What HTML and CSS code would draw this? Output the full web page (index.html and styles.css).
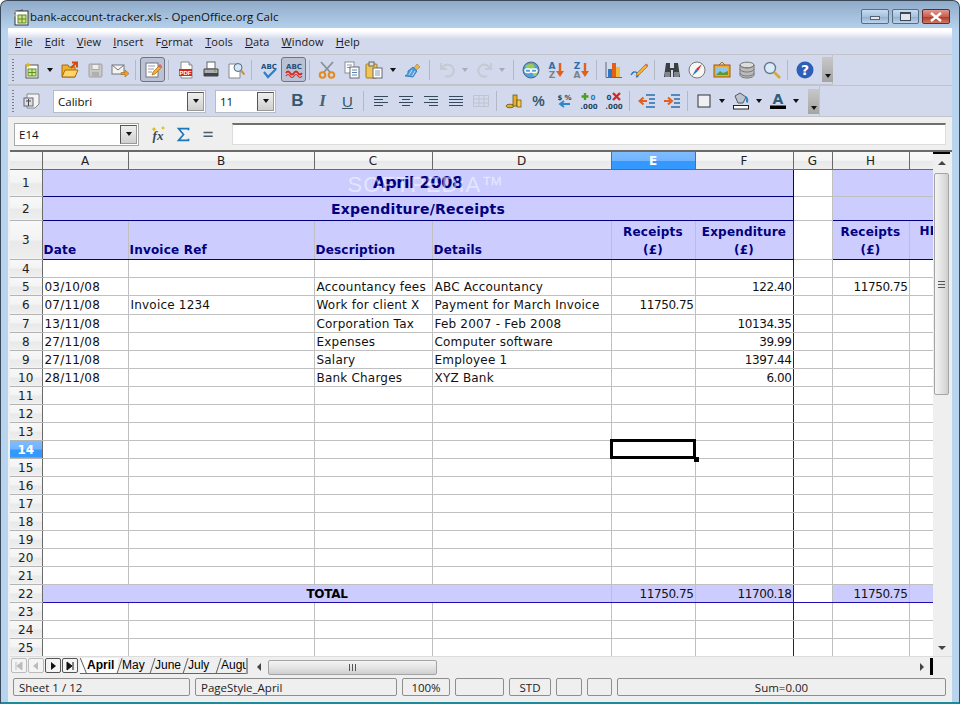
FILE: index.html
```html
<!DOCTYPE html>
<html lang="en">
<head>
    <meta charset="UTF-8">
    <title>bank-account-tracker.xls - OpenOffice.org Calc</title>
    <link rel="stylesheet" href="styles.css">
</head>
<body>
<div class="window">

    <div class="titlebar">
        <svg class="app-icon" viewBox="0 0 18 18"><path d="M2 4l9-3v3z" fill="#777"/><rect x="3" y="3" width="13" height="14" fill="#fff" stroke="#333"/><rect x="6" y="7" width="8" height="8" fill="#cfe08a" stroke="#5a8a20"/><path d="M10 7v8M6 11h8" stroke="#5a8a20"/><path d="M2 2l3 1-3 2zM2 6l3 1-3 2z" fill="#aaa"/></svg>
        <span class="title">bank-account-tracker.xls - OpenOffice.org Calc</span>
        <div class="caption-btns">
            <span class="cap"><i class="cap-min"></i></span>
            <span class="cap"><i class="cap-max"></i></span>
            <span class="cap cap-close">
                <svg viewBox="0 0 14 10" width="14" height="10"><path d="M2 1l10 8M12 1L2 9" stroke="#fff" stroke-width="2.4"/></svg>
            </span>
        </div>
    </div>

    <div class="content">
        <div class="menubar">
            <span><u>F</u>ile</span>
            <span><u>E</u>dit</span>
            <span><u>V</u>iew</span>
            <span><u>I</u>nsert</span>
            <span>F<u>o</u>rmat</span>
            <span><u>T</u>ools</span>
            <span><u>D</u>ata</span>
            <span><u>W</u>indow</span>
            <span><u>H</u>elp</span>
        </div>

        <div class="toolrow">
            <div class="toolbar tb-standard">
                <i class="handle"></i>
                <span class="btn"><svg viewBox="0 0 18 18"><rect x="3" y="4" width="12" height="13" fill="#fff" stroke="#555"/><rect x="5" y="8" width="8" height="7" fill="#d4e48e" stroke="#5d8f22"/><path d="M9 8v7M5 11.500h8" stroke="#5d8f22"/><path d="M5 1l1 2 2 1-2 1-1 2-1-2-2-1 2-1z" fill="#e8b800"/></svg></span>
                <span class="arrow"><b></b></span>
                <span class="btn btn-after-arrow"><svg viewBox="0 0 18 18"><path d="M1 4h6l1 2h6v10H1z" fill="#f0b429" stroke="#a86a10"/><path d="M1 16l3-7h13l-3 7z" fill="#fcd668" stroke="#a86a10"/><path d="M10 7l5-5M11 1.500h5v5" stroke="#d9480f" stroke-width="2" fill="none"/></svg></span>
                <span class="btn"><svg viewBox="0 0 18 18"><rect x="3" y="3" width="13" height="13" rx="1" fill="#c8c8c8" stroke="#a0a0a0"/><rect x="6" y="3.500" width="7" height="5" fill="#eee" stroke="#aaa"/><rect x="6" y="11" width="7" height="5" fill="#b0b0b0"/></svg></span>
                <span class="btn"><svg viewBox="0 0 18 18"><rect x="1" y="4" width="12" height="9" fill="#f4f4f4" stroke="#777"/><path d="M1 4l6 5 6-5" fill="none" stroke="#777"/><path d="M10 11.500h4V9l4 3.500-4 3.500v-2.500h-4z" fill="#f0a020" stroke="#a86a10" stroke-width=".6"/></svg></span>
                <i class="sep"></i>
                <span class="btn btn-on"><svg viewBox="0 0 18 18"><rect x="2" y="2" width="12" height="14" fill="#fff" stroke="#777"/><path d="M4 5h7M4 8h6M4 11h4" stroke="#99a"/><path d="M8 14l1-3 7-7 2 2-7 7z" fill="#f2b134" stroke="#a86a10" stroke-width=".7"/><path d="M14 5l2-2 2 2-2 2z" fill="#e06666"/></svg></span>
                <i class="sep"></i>
                <span class="btn"><svg viewBox="0 0 18 18"><path d="M4 1h8l3 3v13H4z" fill="#fff" stroke="#888"/><path d="M12 1v3h3" fill="#ddd" stroke="#888"/><rect x="2" y="8" width="13" height="7" fill="#d8281c"/><text x="8.500" y="13.800" class="svg-pdf">PDF</text></svg></span>
                <span class="btn"><svg viewBox="0 0 18 18"><rect x="5" y="1" width="8" height="7" fill="#fff" stroke="#666"/><path d="M2 8h14v7H2z" fill="#a9afb5" stroke="#444"/><rect x="2" y="12" width="14" height="3" fill="#444"/><rect x="12" y="9.500" width="2" height="1.300" fill="#5ac020"/></svg></span>
                <span class="btn"><svg viewBox="0 0 18 18"><path d="M2 3h8l3 3v11H2z" fill="#fff" stroke="#888"/><circle cx="11" cy="6.500" r="4" fill="#cfe6fb" stroke="#567"/><path d="M14 9.500l3.500 4" stroke="#c89a2a" stroke-width="2.200"/></svg></span>
                <i class="sep"></i>
                <span class="btn"><svg viewBox="0 0 18 18"><text x="9" y="8" class="svg-abc">ABC</text><path d="M4 11l4 5 8-8" fill="none" stroke="#2a7fd0" stroke-width="2.200"/></svg></span>
                <span class="btn btn-on"><svg viewBox="0 0 18 18"><text x="9" y="8" class="svg-abc">ABC</text><path d="M1 12q2-3 4 0t4 0 4 0 4 0" fill="none" stroke="#d8281c" stroke-width="1.800"/><path d="M1 15q2-3 4 0t4 0 4 0 4 0" fill="none" stroke="#d8281c" stroke-width="1.200"/></svg></span>
                <i class="sep"></i>
                <span class="btn"><svg viewBox="0 0 18 18"><path d="M3 1l9 10M15 1L6 11" stroke="#8a8f95" stroke-width="1.800"/><circle cx="4.500" cy="14" r="2.800" fill="none" stroke="#e58a1f" stroke-width="2"/><circle cx="13.500" cy="14" r="2.800" fill="none" stroke="#e58a1f" stroke-width="2"/></svg></span>
                <span class="btn"><svg viewBox="0 0 18 18"><rect x="2" y="1" width="9" height="11" fill="#fff" stroke="#8a8f95"/><path d="M4 4h5M4 6.500h5" stroke="#89a"/><rect x="7" y="6" width="9" height="11" fill="#fff" stroke="#667"/><path d="M9 9h5M9 11.500h5M9 14h5" stroke="#5a82b0"/></svg></span>
                <span class="btn btn-paste"><svg viewBox="0 0 18 18"><rect x="1" y="3" width="11" height="14" rx="1" fill="#f2c655" stroke="#a07a20"/><rect x="4" y="1" width="5" height="4" fill="#ddd" stroke="#666"/><rect x="8" y="7" width="9" height="10" fill="#fff" stroke="#667"/><path d="M10 10h5M10 12h5M10 14h5" stroke="#89a"/></svg></span>
                <span class="arrow arrow-paste"><b></b></span>
                <span class="btn btn-brush"><svg viewBox="0 0 18 18"><path d="M10 7l3-4 3 3-4 3z" fill="#e9b84a" stroke="#a07a20" stroke-width=".6"/><path d="M9 6l4 4-4 6-8-1q4-2 3-5z" fill="#4e9de0" stroke="#2367a8" stroke-width=".7"/><path d="M5 14l3-5M8 15l3-5" stroke="#bfe0fa"/></svg></span>
                <i class="sep sep-wide"></i>
                <span class="btn"><svg viewBox="0 0 18 18"><path d="M3 2v6h6M4 8a6 6 0 1 1 3 7" fill="none" stroke="#c6cad2" stroke-width="2.200"/></svg></span>
                <span class="arrow arrow-off"><b></b></span>
                <span class="btn btn-redo"><svg viewBox="0 0 18 18"><path d="M15 2v6H9M14 8a6 6 0 1 0-3 7" fill="none" stroke="#c6cad2" stroke-width="2.200"/></svg></span>
                <span class="arrow arrow-off arrow-redo"><b></b></span>
                <i class="sep sep-redo"></i>
                <span class="btn"><svg viewBox="0 0 18 18"><circle cx="9" cy="9" r="8" fill="#4f9fd8" stroke="#567"/><path d="M3 5q4-3 8-2l2 3-3 2-5 0zM11 11l5-1-2 5-3 0z" fill="#9cc95a"/><rect x="3" y="8" width="6" height="3.500" rx="1.700" fill="none" stroke="#fff" stroke-width="1.500"/><rect x="9" y="8" width="6" height="3.500" rx="1.700" fill="none" stroke="#fff" stroke-width="1.500"/></svg></span>
                <span class="btn"><svg viewBox="0 0 18 18"><text x="5" y="7.500" class="svg-sort svg-blue">A</text><text x="5" y="16.500" class="svg-sort svg-gray">Z</text><path d="M13 2v10" stroke="#e2601a" stroke-width="2.400"/><path d="M9 10h8l-4 6z" fill="#e2601a"/></svg></span>
                <span class="btn"><svg viewBox="0 0 18 18"><text x="5" y="7.500" class="svg-sort svg-blue">Z</text><text x="5" y="16.500" class="svg-sort svg-gray">A</text><path d="M13 2v10" stroke="#e2601a" stroke-width="2.400"/><path d="M9 10h8l-4 6z" fill="#e2601a"/></svg></span>
                <i class="sep"></i>
                <span class="btn"><svg viewBox="0 0 18 18"><path d="M1 1v15.500h16" fill="none" stroke="#667"/><rect x="3" y="8" width="4" height="8" fill="#2d76c0"/><rect x="7" y="2" width="4" height="14" fill="#e2601a"/><rect x="11" y="6" width="4" height="10" fill="#f1bd38"/></svg></span>
                <span class="btn"><svg viewBox="0 0 18 18"><path d="M1 14q3-5 6-2t-1 4" fill="none" stroke="#2d76c0" stroke-width="1.400"/><path d="M7 12l9-9 2 2-9 9-3 1z" fill="#f2b134" stroke="#a86a10" stroke-width=".7"/><path d="M15 4l1.500-1.500 1.500 1.500-1.500 1.500z" fill="#e06666"/></svg></span>
                <i class="sep"></i>
                <span class="btn"><svg viewBox="0 0 18 18"><path d="M3 2h4v5h4V2h4l2 14h-7V9H8v7H1z" fill="#3b3f44"/><rect x="2" y="11" width="5" height="5" fill="#80858b"/><rect x="11" y="11" width="5" height="5" fill="#80858b"/></svg></span>
                <span class="btn"><svg viewBox="0 0 18 18"><circle cx="9" cy="9" r="8" fill="#f6f6f6" stroke="#777"/><path d="M14 3l-4 7-2-2z" fill="#d8281c"/><path d="M4 15l4-7 2 2z" fill="#2d76c0"/></svg></span>
                <span class="btn"><svg viewBox="0 0 18 18"><path d="M6 4l3-3 3 3" fill="none" stroke="#b06a10"/><rect x="1" y="4" width="16" height="12" fill="#f0a830" stroke="#9c5c10"/><rect x="3" y="6" width="12" height="8" fill="#8cc8ee"/><path d="M3 14l4-4 3 2 5-2v4z" fill="#5a9a30"/></svg></span>
                <span class="btn"><svg viewBox="0 0 18 18"><ellipse cx="9" cy="4" rx="7" ry="2.800" fill="#ddd" stroke="#777"/><path d="M2 4v10c0 1.500 3 3 7 3s7-1.500 7-3V4c0 1.500-3 3-7 3S2 5.500 2 4z" fill="#bbb" stroke="#777"/><path d="M2 8c0 1.500 3 3 7 3s7-1.500 7-3M2 12c0 1.500 3 3 7 3s7-1.500 7-3" fill="none" stroke="#777"/></svg></span>
                <span class="btn"><svg viewBox="0 0 18 18"><circle cx="7" cy="7" r="5.500" fill="#d8ecfb" stroke="#6a7a8a" stroke-width="1.400"/><path d="M11 11l6 6" stroke="#d8a830" stroke-width="2.600"/></svg></span>
                <i class="sep"></i>
                <span class="btn"><svg viewBox="0 0 18 18"><circle cx="9" cy="9" r="8.500" fill="#2e5fb8"/><text x="9" y="14" class="svg-help">?</text></svg></span>
                <span class="more more-standard"><b></b></span>
            </div>
        </div>

        <div class="toolrow toolrow-last">
            <div class="toolbar tb-format">
                <i class="handle"></i>
                <span class="btn"><svg viewBox="0 0 18 18"><path d="M4 2h12v10l-4 4H4z" fill="#f4f4f4" stroke="#888"/><rect x="1" y="6" width="9" height="8" fill="#ddd" stroke="#667"/><path d="M5.500 7v7M3 9h5" stroke="#445"/></svg></span>
                <div class="combo combo-font">Calibri<span class="combo-btn"><b></b></span></div>
                <div class="combo combo-size">11<span class="combo-btn"><b></b></span></div>
                <span class="btn btn-b"><em class="fmt fmt-b">B</em></span>
                <span class="btn"><em class="fmt fmt-i">I</em></span>
                <span class="btn"><em class="fmt fmt-u">U</em></span>
                <i class="sep"></i>
                <span class="btn"><svg viewBox="0 0 18 18"><path d="M2 4.500h14M2 7.500h9M2 10.500h14M2 13.500h9" stroke="#34495e"/></svg></span>
                <span class="btn"><svg viewBox="0 0 18 18"><path d="M2 4.500h14M5 7.500h8M2 10.500h14M5 13.500h8" stroke="#34495e"/></svg></span>
                <span class="btn"><svg viewBox="0 0 18 18"><path d="M2 4.500h14M7 7.500h9M2 10.500h14M7 13.500h9" stroke="#34495e"/></svg></span>
                <span class="btn"><svg viewBox="0 0 18 18"><path d="M2 4.500h14M2 7.500h14M2 10.500h14M2 13.500h14" stroke="#34495e"/></svg></span>
                <span class="btn"><svg viewBox="0 0 18 18"><path d="M1.500 3.500h15v11h-15zM1.500 7h15M1.500 11h15M7 3.500v11M12 3.500v11" fill="none" stroke="#c0c4ce"/></svg></span>
                <i class="sep"></i>
                <span class="btn"><svg viewBox="0 0 18 18"><ellipse cx="5" cy="14" rx="4" ry="1.800" fill="#e8b020" stroke="#5c4a10" stroke-width=".7"/><rect x="8" y="3" width="4" height="11" fill="#e8b020" stroke="#5c4a10" stroke-width=".7"/><rect x="12" y="8" width="4" height="7" fill="#f4cd50" stroke="#5c4a10" stroke-width=".7"/></svg></span>
                <span class="btn"><em class="fmt fmt-pct">%</em></span>
                <span class="btn"><svg viewBox="0 0 18 18"><text x="5" y="8" class="svg-small">$</text><text x="13" y="8" class="svg-small">%</text><path d="M15 12H6M9 9l-4 3 4 3" fill="none" stroke="#2d86c8" stroke-width="1.800"/></svg></span>
                <span class="btn"><svg viewBox="0 0 18 18"><path d="M5 1v7M1.500 4.500h7" stroke="#4aa020" stroke-width="2.400"/><text x="13" y="8" class="svg-small svg-num">0</text><text x="9" y="16.500" class="svg-small">.000</text></svg></span>
                <span class="btn"><svg viewBox="0 0 18 18"><text x="4" y="8" class="svg-small">0</text><path d="M8 1l7 7M15 1l-7 7" stroke="#d8281c" stroke-width="2.400"/><text x="9" y="16.500" class="svg-small">.000</text></svg></span>
                <i class="sep"></i>
                <span class="btn"><svg viewBox="0 0 18 18"><path d="M9 9H3M5.500 5.500L1.500 9l4 3.500" fill="none" stroke="#e2601a" stroke-width="2"/><path d="M8 3h9M11 7h6M11 11h6M8 15h9" stroke="#2d6ea8" stroke-width="1.300"/></svg></span>
                <span class="btn"><svg viewBox="0 0 18 18"><path d="M1 9h6M5 5.500L9 9l-4 3.500" fill="none" stroke="#e2601a" stroke-width="2"/><path d="M8 3h9M11 7h6M11 11h6M8 15h9" stroke="#2d6ea8" stroke-width="1.300"/></svg></span>
                <i class="sep"></i>
                <span class="btn btn-border"><svg viewBox="0 0 18 18"><rect x="3" y="3" width="12" height="12" fill="#eef0f6" stroke="#333"/></svg></span>
                <span class="arrow"><b></b></span>
                <span class="btn btn-fill"><svg viewBox="0 0 18 18"><path d="M3 4l5-3 6 4-3 6H6z" fill="#bcc4cc" stroke="#556"/><path d="M14 4q3 2 2 7l-2-1z" fill="#2d86c8"/><rect x="1.500" y="13.500" width="15" height="3.500" fill="#fff" stroke="#222"/></svg></span>
                <span class="arrow"><b></b></span>
                <span class="btn btn-fill"><svg viewBox="0 0 18 18"><text x="9" y="12" class="svg-color">A</text><rect x="1" y="13.500" width="16" height="3.500" fill="#000"/></svg></span>
                <span class="arrow"><b></b></span>
                <span class="more more-format"><b></b></span>
            </div>
        </div>

        <div class="formulabar">
            <div class="combo combo-name">E14<span class="combo-btn"><b></b></span></div>
            <span class="fbtn fbtn-first"><svg viewBox="0 0 18 18"><text x="8" y="15" class="svg-fx">fx</text><path d="M4 2l1 1.500L6.500 4 5 5 4 6.500 3 5 1.500 4 3 3.500zM13 1l.7 1.300 1.300.7-1.300.7-.7 1.300-.7-1.300L11 3l1.300-.7z" fill="#e8b800"/></svg></span>
            <span class="fbtn"><svg class="fbtn-small" viewBox="0 0 18 18"><path d="M15 4V2H3l6 7-6 7h12v-2" fill="none" stroke="#1978bc" stroke-width="2"/></svg></span>
            <span class="fbtn"><svg class="fbtn-small" viewBox="0 0 18 18"><path d="M3 6.500h11M3 11h11" stroke="#4a5a68" stroke-width="1.800"/></svg></span>
            <div class="formula-input"></div>
        </div>

        <div class="sheet">
            <div class="grid-wrap">
                <table class="grid">
                    <colgroup>
                        <col class="c-head"><col class="c-a"><col class="c-b"><col class="c-c"><col class="c-d"><col class="c-e"><col class="c-f"><col class="c-g"><col class="c-h"><col class="c-i">
                    </colgroup>
                    <thead>
                        <tr class="r-head"><th></th><th>A</th><th>B</th><th>C</th><th>D</th><th class="selected">E</th><th>F</th><th>G</th><th>H</th><th></th></tr>
                    </thead>
                    <tbody>
                        <tr class="r-1"><th>1</th><td colspan="6" class="title1">April 2008<span class="watermark">SOFTPEDIA™</span></td><td class="gap gap-top"></td><td colspan="2" class="band band-top"></td></tr>
                        <tr class="r-2"><th>2</th><td colspan="6" class="title2">Expenditure/Receipts</td><td class="gap"></td><td colspan="2" class="band band-low"></td></tr>
                        <tr class="r-3"><th>3</th><td class="hd">Date</td><td class="hd">Invoice Ref</td><td class="hd">Description</td><td class="hd">Details</td><td class="hd hd-c">Receipts<br>(£)</td><td class="hd hd-c line-r">Expenditure<br>(£)</td><td></td><td class="hd hd-c line-l">Receipts<br>(£)</td><td class="hd hd-clip">HI</td></tr>
                        <tr><th>4</th><td></td><td></td><td></td><td></td><td></td><td class="line-r"></td><td></td><td></td><td></td></tr>
                        <tr><th>5</th><td>03/10/08</td><td></td><td>Accountancy fees</td><td>ABC Accountancy</td><td></td><td class="num line-r">122.40</td><td></td><td class="num">11750.75</td><td></td></tr>
                        <tr class="r-6"><th>6</th><td>07/11/08</td><td>Invoice 1234</td><td>Work for client X</td><td>Payment for March Invoice</td><td class="num">11750.75</td><td class="line-r"></td><td></td><td></td><td></td></tr>
                        <tr><th>7</th><td>13/11/08</td><td></td><td>Corporation Tax</td><td>Feb 2007 - Feb 2008</td><td></td><td class="num line-r">10134.35</td><td></td><td></td><td></td></tr>
                        <tr><th>8</th><td>27/11/08</td><td></td><td>Expenses</td><td>Computer software</td><td></td><td class="num line-r">39.99</td><td></td><td></td><td></td></tr>
                        <tr><th>9</th><td>27/11/08</td><td></td><td>Salary</td><td>Employee 1</td><td></td><td class="num line-r">1397.44</td><td></td><td></td><td></td></tr>
                        <tr><th>10</th><td>28/11/08</td><td></td><td>Bank Charges</td><td>XYZ Bank</td><td></td><td class="num line-r">6.00</td><td></td><td></td><td></td></tr>
                        <tr><th>11</th><td></td><td></td><td></td><td></td><td></td><td class="line-r"></td><td></td><td></td><td></td></tr>
                        <tr><th>12</th><td></td><td></td><td></td><td></td><td></td><td class="line-r"></td><td></td><td></td><td></td></tr>
                        <tr><th>13</th><td></td><td></td><td></td><td></td><td></td><td class="line-r"></td><td></td><td></td><td></td></tr>
                        <tr><th class="selected">14</th><td></td><td></td><td></td><td></td><td class="cursor"></td><td class="line-r"></td><td></td><td></td><td></td></tr>
                        <tr><th>15</th><td></td><td></td><td></td><td></td><td></td><td class="line-r"></td><td></td><td></td><td></td></tr>
                        <tr><th>16</th><td></td><td></td><td></td><td></td><td></td><td class="line-r"></td><td></td><td></td><td></td></tr>
                        <tr><th>17</th><td></td><td></td><td></td><td></td><td></td><td class="line-r"></td><td></td><td></td><td></td></tr>
                        <tr><th>18</th><td></td><td></td><td></td><td></td><td></td><td class="line-r"></td><td></td><td></td><td></td></tr>
                        <tr><th>19</th><td></td><td></td><td></td><td></td><td></td><td class="line-r"></td><td></td><td></td><td></td></tr>
                        <tr><th>20</th><td></td><td></td><td></td><td></td><td></td><td class="line-r"></td><td></td><td></td><td></td></tr>
                        <tr><th>21</th><td></td><td></td><td></td><td></td><td></td><td class="line-r"></td><td></td><td></td><td></td></tr>
                        <tr class="r-total"><th>22</th><td colspan="4" class="total-label">TOTAL</td><td class="num">11750.75</td><td class="num line-r">11700.18</td><td class="gap-total"></td><td class="num">11750.75</td><td></td></tr>
                        <tr><th>23</th><td></td><td></td><td></td><td></td><td></td><td class="line-r"></td><td></td><td></td><td></td></tr>
                        <tr><th>24</th><td></td><td></td><td></td><td></td><td></td><td class="line-r"></td><td></td><td></td><td></td></tr>
                        <tr><th>25</th><td></td><td></td><td></td><td></td><td></td><td class="line-r"></td><td></td><td></td><td></td></tr>
                    </tbody>
                </table>
            </div>
            <div class="vscroll">
                <span class="vs-top"></span>
                <span class="vs-btn"><b class="up"></b></span>
                <span class="vs-thumb"><i></i></span>
                <span class="vs-track"></span>
                <span class="vs-btn"><b class="down"></b></span>
            </div>
        </div>

        <div class="tabbar">
            <div class="tabnav">
                <span class="nav off"><svg viewBox="0 0 10 10"><path d="M2 1v8M8 1v8L3 5z" fill="#bbb" stroke="#bbb"/></svg></span>
                <span class="nav off"><svg viewBox="0 0 10 10"><path d="M7 1v8L2 5z" fill="#bbb"/></svg></span>
                <span class="nav"><svg viewBox="0 0 10 10"><path d="M3 1v8l5-4z" fill="#111"/></svg></span>
                <span class="nav"><svg viewBox="0 0 10 10"><path d="M2 1v8l5-4zM8 1v8" fill="#111" stroke="#111"/></svg></span>
            </div>
            <div class="tabs">
                <span class="tab active">April</span>
                <span class="tab">May</span>
                <span class="tab">June</span>
                <span class="tab">July</span>
                <span class="tab">August</span>
            </div>
            <div class="hscroll">
                <span class="hs-left"></span>
                <span class="hs-thumb"><i></i></span>
                <span class="hs-right"></span>
            </div>
            <i class="split"></i>
        </div>

        <div class="statusbar">
            <span class="pane p-sheet">Sheet 1 / 12</span>
            <span class="pane p-style">PageStyle_April</span>
            <span class="pane p-zoom">100%</span>
            <span class="pane p-blank"></span>
            <span class="pane p-std">STD</span>
            <span class="pane p-small"></span>
            <span class="pane p-small2"></span>
            <span class="pane p-sum">Sum=0.00</span>
        </div>
    </div>
</div>
</body>
</html>
```

FILE: styles.css
```css
* {
    margin: 0;
    padding: 0;
    box-sizing: border-box;
}

body {
    width: 960px;
    height: 704px;
    overflow: hidden;
    background: #fff;
    font-family: "DejaVu Sans", sans-serif;
    font-size: 12px;
    color: #000;
}

.window {
    width: 960px;
    height: 704px;
    display: flex;
    flex-direction: column;
    border: 1px solid #3a4a5a;
    border-bottom: 2px solid #1c8c9c;
    border-radius: 7px 7px 0 0;
    background: linear-gradient(#8fabc9 0, #b9d4ef 30px, #b9d4ef 100%);
    overflow: hidden;
}

/* title bar */
.titlebar {
    height: 27px;
    flex: none;
    display: flex;
    align-items: center;
    padding: 4px 0 0 11px;
}

.app-icon {
    width: 18px;
    height: 18px;
}

.title {
    padding-left: 0;
    font-family: "Open Sans", sans-serif;
    font-size: 11.5px;
    color: #111;
}

.caption-btns {
    margin-left: auto;
    margin-right: 9px;
    display: flex;
    gap: 3px;
}

.cap {
    display: flex;
    align-items: center;
    justify-content: center;
    width: 27px;
    height: 15px;
    border: 1px solid #5a6c80;
    border-radius: 2px;
    background: linear-gradient(#c6dcf2 0, #a7c2de 50%, #93b0cf 55%, #bcd4ec 100%);
}

.cap:first-child {
    width: 28px;
}

.cap-close {
    width: 28px;
    border-color: #6a2a28;
    background: linear-gradient(#dc9a90 0, #c8604f 50%, #b03a28 55%, #cf7a66 100%);
}

.cap-min {
    width: 10px;
    height: 4px;
    margin-top: 3px;
    background: #dfe6ef;
    border: 1px solid #56606e;
}

.cap-max {
    width: 11px;
    height: 9px;
    background: #dfe6ef;
    border: 1px solid #3c4654;
    border-top-width: 2px;
}

/* everything inside the frame */
.content {
    flex: none;
    width: 944px;
    margin-left: 7px;
    height: 667px;
    background: #efefef;
    display: flex;
    flex-direction: column;
}

.menubar {
    height: 26px;
    flex: none;
    display: flex;
    align-items: center;
    padding: 1px 0 0 7px;
    gap: 12px;
    font-family: "Open Sans", sans-serif;
    font-size: 11px;
    letter-spacing: 0.1px;
    background: linear-gradient(#fff 0, #fff 3px, #d3d9ec 11px);
}

.menubar span {
    color: #1a1a1a;
}

.toolrow {
    height: 31px;
    flex: none;
    background: #d3d9ec;
    border-top: 1px solid #c2c4ca;
}

.toolrow-last {
    height: 32px;
    border-bottom: 1px solid #c2c4ca;
}

.toolbar {
    height: 30px;
    display: flex;
    align-items: center;
    border-right: 1px solid #c2c4ca;
    border-bottom: 1px solid #c2c4ca;
    background: #d3d9ec;
}

.tb-standard {
    width: 825px;
}

.tb-format {
    width: 812px;
    height: 30px;
    border-bottom: 0;
}

.handle {
    width: 11px;
    height: 22px;
    flex: none;
    background: repeating-linear-gradient(#7a7f88 0, #7a7f88 1px, transparent 1px, transparent 3px) 4px 0 / 2px 100% no-repeat;
}

.btn {
    width: 25px;
    height: 25px;
    flex: none;
    display: flex;
    align-items: center;
    justify-content: center;
}

.btn svg {
    width: 18px;
    height: 18px;
    display: block;
}

.btn-on {
    background: #bcc2d6;
    border: 1px solid #70757f;
    border-radius: 3px;
}

.btn-after-arrow {
    margin-left: 2px;
}

.btn-paste {
    width: 20px;
}

.arrow-paste {
    margin-left: 3px;
}

.btn-brush {
    margin-left: 2px;
}

.btn-redo {
    margin-left: 2px;
}

.arrow-redo {
    margin-left: -1px;
}

.btn-b {
    margin-left: 9px;
}

.btn-border {
    margin-left: -1px;
}

.btn-fill {
    margin-left: 1px;
}

.arrow {
    width: 11px;
    height: 25px;
    flex: none;
    display: flex;
    align-items: center;
    justify-content: center;
}

.arrow b,
.combo-btn b,
.more b {
    display: block;
    width: 0;
    height: 0;
    border: 3.5px solid transparent;
    border-top: 4px solid #111;
    border-bottom: 0;
}

.arrow-off b {
    border-top-color: #aab;
}

.sep {
    width: 1px;
    height: 20px;
    flex: none;
    margin: 0 4px 0 3px;
    background: #b4b8c4;
}

.sep-wide {
    margin-left: 4px;
}

.sep-redo {
    margin-left: 6px;
    margin-right: 4px;
}

.more {
    width: 11px;
    height: 25px;
    flex: none;
    display: flex;
    align-items: flex-end;
    justify-content: center;
    padding-bottom: 4px;
    background: linear-gradient(#c8c8c8, #a4a4a4);
}

.more-standard {
    margin-left: 5px;
}

.more-format {
    margin-left: 7px;
}

.combo {
    height: 23px;
    flex: none;
    display: flex;
    align-items: center;
    padding-left: 4px;
    background: #fff;
    border: 1px solid #b8bcc4;
    font-family: "Open Sans", sans-serif;
    font-size: 11.5px;
    color: #111;
}

.combo-btn {
    margin-left: auto;
    margin-right: 1px;
    width: 17px;
    height: 19px;
    display: flex;
    align-items: center;
    justify-content: center;
    background: linear-gradient(#efefef, #cfcfcf);
    border: 1px solid #555;
    border-right-color: #999;
    border-bottom-color: #999;
}

.combo-font {
    width: 153px;
    margin-left: 9px;
}

.combo-size {
    width: 61px;
    margin-left: 9px;
}

.fmt {
    font-family: "Liberation Sans", sans-serif;
    font-style: normal;
    color: #34586e;
}

.fmt-b {
    font-size: 17px;
    font-weight: bold;
}

.fmt-i {
    font-family: "Liberation Serif", serif;
    font-size: 17px;
    font-weight: bold;
    font-style: italic;
    color: #4a6070;
}

.fmt-u {
    font-size: 15px;
    text-decoration: underline;
}

.fmt-pct {
    font-size: 14px;
    font-weight: bold;
}

.svg-pdf {
    font: bold 6px "Liberation Sans", sans-serif;
    fill: #fff;
    text-anchor: middle;
}

.svg-abc {
    font: bold 7px "DejaVu Sans", sans-serif;
    fill: #23507c;
    text-anchor: middle;
}

.svg-sort {
    font: bold 9px "DejaVu Sans", sans-serif;
    text-anchor: middle;
}

.svg-blue {
    fill: #2d6ea8;
}

.svg-gray {
    fill: #7d8288;
}

.svg-help {
    font: bold 14px "DejaVu Sans", sans-serif;
    fill: #fff;
    text-anchor: middle;
}

.svg-small {
    font: bold 7px "DejaVu Sans", sans-serif;
    fill: #24465e;
    text-anchor: middle;
}

.svg-num {
    fill: #2d76c0;
}

.svg-color {
    font: bold 14px "DejaVu Sans", sans-serif;
    fill: #2d6080;
    text-anchor: middle;
}

.svg-fx {
    font: italic bold 13px "Liberation Serif", serif;
    fill: #3a4a58;
    text-anchor: middle;
}

/* formula bar */
.formulabar {
    height: 33px;
    flex: none;
    display: flex;
    align-items: center;
    padding: 1px 0 0 6px;
    background: #efefef;
}

.combo-name {
    width: 125px;
    border-color: #a8a8a8;
}

.fbtn {
    width: 25px;
    height: 25px;
    flex: none;
    display: flex;
    align-items: center;
    justify-content: center;
}

.fbtn svg {
    width: 18px;
    height: 18px;
}

.fbtn svg.fbtn-small {
    width: 15px;
    height: 15px;
}

.fbtn-first {
    margin-left: 7px;
}

.formula-input {
    width: 714px;
    height: 22px;
    margin-left: 11px;
    background: #fff;
    border: 1px solid #dcdcdc;
    border-top: 2px solid #707070;
}

/* the grid */
.sheet {
    height: 506px;
    flex: none;
    margin-left: 2px;
    display: flex;
    border-top: 2px solid #6a6a6a;
}

.grid-wrap {
    width: 923px;
    height: 504px;
    overflow: hidden;
    background: #fff;
}

.grid {
    width: 923px;
    table-layout: fixed;
    border-collapse: collapse;
    font-size: 12px;
}

.c-head { width: 32px; }
.c-a { width: 86px; }
.c-b { width: 186px; }
.c-c { width: 118px; }
.c-d { width: 179px; }
.c-e { width: 84px; }
.c-f { width: 98px; }
.c-g { width: 39px; }
.c-h { width: 77px; }
.c-i { width: 24px; }

.grid tr {
    height: 18px;
}

.grid .r-head {
    height: 17px;
}

.grid th {
    font-weight: normal;
    background: linear-gradient(#f8f8f8 0, #f3f3f3 50%, #e9e9e9 55%, #eeeeee 100%);
    border-right: 1px solid #6a6a6a;
    border-bottom: 1px solid #b4b4b4;
    color: #222;
    padding: 1px 0 0;
    line-height: 14px;
}

.grid thead th {
    border-bottom: 1px solid #6a6a6a;
}

.grid th.selected {
    color: #fff;
    font-weight: bold;
    background: linear-gradient(#80bcff 0, #70b4ff 50%, #3399ff 55%, #3399ff 100%);
}

.grid td {
    border-right: 1px solid #c0c0c0;
    border-bottom: 1px solid #c0c0c0;
    padding: 1px 1px 0 2px;
    white-space: nowrap;
    overflow: hidden;
    color: #111;
    line-height: 14px;
    letter-spacing: 0.2px;
}

.grid .r-1 {
    height: 27px;
}

.grid .r-2 {
    height: 24px;
}

.grid .r-3 {
    height: 39px;
}

.grid .r-6 {
    height: 19px;
}

.grid td.title1,
.grid td.title2,
.grid td.hd,
.grid td.band {
    background: #ccccff;
    color: #000080;
    font-weight: bold;
}

.grid td.title1 {
    position: relative;
    text-align: center;
    font-size: 16px;
    line-height: 20px;
    letter-spacing: -0.3px;
    border-bottom: 1px solid #000080;
    border-right: 1px solid #000080;
}

.grid td.title2 {
    text-align: center;
    font-size: 14px;
    line-height: 18px;
    font-weight: 600;
    letter-spacing: 0.25px;
    border-bottom: 1px solid #000080;
    border-right: 1px solid #000080;
}

.watermark {
    position: absolute;
    left: 305px;
    top: 2px;
    font: normal 22px "Liberation Sans", sans-serif;
    letter-spacing: 1px;
    color: rgba(255, 255, 255, 0.5);
}

.grid td.hd {
    vertical-align: bottom;
    padding: 0 1px;
    font-size: 12px;
    line-height: 18px;
    border-bottom: 1px solid #000080;
}

.grid td.hd-c {
    text-align: center;
}

.grid td.hd-clip {
    padding-left: 10px;
    overflow: hidden;
    vertical-align: top;
    padding-top: 1px;
    border-right: 0;
}

.grid td.band {
    border-right: 0;
    border-bottom: 1px solid #c0c0c0;
}

.grid td.band-top {
    border-left: 1px solid #000;
}

.grid td.band-low {
    border-left: 1px solid #c0c0c0;
    border-bottom: 1px solid #000080;
}

.grid td.line-r {
    border-right: 1px solid #2010b0;
}

.grid td.line-l {
    border-left: 1px solid #000080;
}

.grid td.num {
    text-align: right;
    padding-right: 1px;
    letter-spacing: -0.4px;
}

.grid .r-total td {
    background: #ccccff;
    border-bottom: 1px solid #2010b0;
}

.grid .r-total td.gap-total {
    background: #fff;
}

.grid td.total-label {
    text-align: center;
    font-weight: bold;
    letter-spacing: -0.3px;
    color: #000;
}

.grid td.cursor {
    position: relative;
    overflow: visible;
    outline: 3px solid #000;
    outline-offset: -2px;
}

.grid td.cursor::after {
    content: '';
    position: absolute;
    right: -4px;
    bottom: -4px;
    width: 5px;
    height: 5px;
    background: #000;
}

/* vertical scrollbar */
.vscroll {
    width: 17px;
    flex: none;
    display: flex;
    flex-direction: column;
    background: #efefef;
}

.vs-top {
    height: 2px;
    background: #000;
}

.vs-btn {
    height: 17px;
    display: flex;
    align-items: center;
    justify-content: center;
}

.vs-btn b {
    display: block;
    width: 0;
    height: 0;
    border: 4px solid transparent;
}

.vs-btn b.up {
    border-top: 0;
    border-bottom: 4px solid #444;
}

.vs-btn b.down {
    border-bottom: 0;
    border-top: 4px solid #444;
}

.vs-thumb {
    height: 222px;
    margin: 2px 1px 0;
    display: flex;
    align-items: center;
    justify-content: center;
    border: 1px solid #a4a4a4;
    border-radius: 2px;
    background: linear-gradient(90deg, #f4f4f4, #e4e4e4 50%, #cfcfcf);
}

.vs-thumb i {
    width: 7px;
    height: 7px;
    background: repeating-linear-gradient(#555 0, #555 1px, transparent 1px, transparent 3px);
}

.vs-track {
    flex: 1;
}

/* sheet tabs */
.tabbar {
    height: 21px;
    flex: none;
    margin-left: 2px;
    display: flex;
    align-items: flex-start;
    padding-top: 1px;
    border-top: 1px solid #dcdcdc;
    background: #efefef;
}

.tabnav {
    width: 70px;
    flex: none;
    display: flex;
    gap: 1px;
    padding-left: 1px;
}

.nav {
    width: 16px;
    height: 15px;
    display: flex;
    align-items: center;
    justify-content: center;
    background: #f4f4f4;
    border: 1px solid #555;
    border-radius: 2px;
}

.nav.off {
    border-color: #bbb;
}

.nav svg {
    width: 10px;
    height: 10px;
}

.tabs {
    width: 168px;
    height: 16px;
    flex: none;
    overflow: hidden;
    display: flex;
    border-right: 2px solid #999;
    font-family: "Liberation Sans", sans-serif;
    font-size: 12px;
}

.tab {
    position: relative;
    width: 33px;
    height: 16px;
    flex: none;
    padding-left: 4px;
    line-height: 15px;
    white-space: nowrap;
    border-bottom: 1px solid #666;
}

.tab::before {
    content: '';
    position: absolute;
    left: 1px;
    top: -1px;
    height: 18px;
    border-left: 1px solid #666;
    transform: rotate(18deg);
}

.tab.active {
    width: 38px;
    font-weight: bold;
    padding-left: 7px;
    background: #fff;
}

.tab.active::before {
    left: 3px;
    transform: rotate(-22deg);
}

.hscroll {
    width: 682px;
    height: 18px;
    flex: none;
    display: flex;
    align-items: center;
}

.hs-left,
.hs-right {
    width: 0;
    height: 0;
    border: 4px solid transparent;
}

.hs-left {
    margin-left: 9px;
    border-left: 0;
    border-right: 4px solid #444;
}

.hs-thumb {
    width: 169px;
    height: 15px;
    margin-left: 7px;
    display: flex;
    align-items: center;
    justify-content: center;
    border: 1px solid #a4a4a4;
    border-radius: 2px;
    background: linear-gradient(#f4f4f4, #e4e4e4 50%, #cfcfcf);
}

.hs-thumb i {
    width: 7px;
    height: 7px;
    background: repeating-linear-gradient(90deg, #555 0, #555 1px, transparent 1px, transparent 3px);
}

.hs-right {
    margin-left: auto;
    margin-right: 6px;
    border-right: 0;
    border-left: 4px solid #444;
}

.split {
    width: 3px;
    height: 17px;
    flex: none;
    background: #000;
}

/* status bar */
.statusbar {
    height: 26px;
    flex: none;
    display: flex;
    gap: 5px;
    padding: 1px 0 0 5px;
    background: #efefef;
}

.pane {
    height: 18px;
    flex: none;
    line-height: 17px;
    padding-left: 5px;
    border: 1px solid #8e8e8e;
    border-radius: 2px;
    font-family: "Open Sans", sans-serif;
    font-size: 11.5px;
    color: #222;
}

.p-sheet { width: 177px; }
.p-style { width: 202px; }
.p-zoom { width: 48px; text-align: center; padding: 0; }
.p-blank { width: 49px; }
.p-std { width: 42px; text-align: center; padding: 0; }
.p-small { width: 26px; }
.p-small2 { width: 25px; }
.p-sum { width: 329px; text-align: center; padding: 0; }
```
